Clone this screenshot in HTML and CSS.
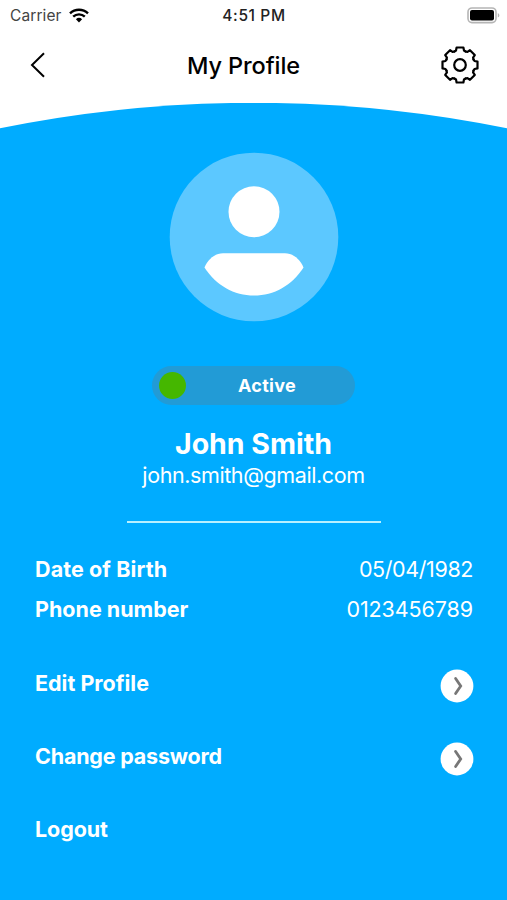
FILE: index.html
```html
<!DOCTYPE html>
<html lang="en">
<head>
    <meta charset="UTF-8">
    <title>My Profile</title>
    <link rel="stylesheet" href="styles.css">
</head>
<body>
    <div class="status-bar">
        <div class="carrier">
            <span>Carrier</span>
            <svg width="20" height="15" viewBox="0 0 20 15">
                <g fill="none" stroke="#000" stroke-width="2.4">
                    <path d="M1 5.3a13 13 0 0 1 18 0"/>
                    <path d="M4.2 8.7a8.4 8.4 0 0 1 11.6 0"/>
                </g>
                <path d="M10 14.4L6.900 11.3a4.5 4.5 0 0 1 6.2 0z"/>
            </svg>
        </div>
        <div class="time">4:51 PM</div>
        <div class="battery">
            <svg width="33" height="17" viewBox="0 0 33 17">
                <rect x="1" y="1" width="28" height="14.6" rx="4" fill="#fff" stroke="#b5b5b5" stroke-width="1.6"/>
                <rect x="3" y="3" width="24" height="10.4" rx="2"/>
                <path d="M30.8 6v4.6q1.6-.7 1.6-2.3t-1.6-2.3z" fill="#b5b5b5"/>
            </svg>
        </div>
    </div>

    <div class="header">
        <svg class="back" width="16" height="26" viewBox="0 0 16 26">
            <path d="M14 1.3L2 13l12 11.7" fill="none" stroke="#000" stroke-width="2"/>
        </svg>
        <h1>My Profile</h1>
        <svg class="settings" width="38" height="38" viewBox="-19 -19 38 38">
            <defs>
                <path id="tooth" d="M-5.6-13.5L-4-14.5L-3.4-17.5H3.4L4-14.5L5.6-13.5"/>
            </defs>
            <g fill="none" stroke="#000" stroke-width="2.2" stroke-linecap="round" stroke-linejoin="round">
                <use href="#tooth"/>
                <use href="#tooth" transform="rotate(45)"/>
                <use href="#tooth" transform="rotate(90)"/>
                <use href="#tooth" transform="rotate(135)"/>
                <use href="#tooth" transform="rotate(180)"/>
                <use href="#tooth" transform="rotate(225)"/>
                <use href="#tooth" transform="rotate(270)"/>
                <use href="#tooth" transform="rotate(315)"/>
                <circle r="5.8"/>
            </g>
        </svg>
    </div>

    <svg class="curve" width="507" height="26" viewBox="0 0 507 26">
        <path d="M0 25.3A1273 1273 0 0 1 507 25.3V26H0z" fill="#00acff"/>
    </svg>

    <div class="profile">
        <svg class="avatar" width="170" height="170" viewBox="0 0 170 170">
            <circle cx="85" cy="85" r="84.3" fill="#5cc8ff"/>
            <circle cx="85" cy="59.8" r="25.5" fill="#fff"/>
            <path d="M54 101.3H116C124 101.3 131 107 134.500 115.500C123 133.500 105 143.500 85 143.500S47 133.500 35.500 115.500C39 107 46 101.300 54 101.300z" fill="#fff"/>
        </svg>

        <div class="status">
            <span class="dot"></span>
            <span class="status-text">Active</span>
        </div>

        <div class="name">John Smith</div>
        <div class="email">john.smith@gmail.com</div>
        <div class="line"></div>

        <div class="details">
            <div class="row"><b class="birth">Date of Birth</b><span class="date">05/04/1982</span></div>
            <div class="row"><b class="phone">Phone number</b><span class="number">0123456789</span></div>
        </div>

        <div class="menu">
            <div class="item">
                <b class="edit">Edit Profile</b>
                <svg width="34" height="34" viewBox="0 0 34 34">
                    <circle cx="17" cy="17" r="16.4" fill="#fff"/>
                    <path d="M15.600 9.500L20.700 17l-5.100 7.500" fill="none" stroke="#777" stroke-width="2.800" stroke-linecap="round"/>
                </svg>
            </div>
            <div class="item">
                <b class="password">Change password</b>
                <svg width="34" height="34" viewBox="0 0 34 34">
                    <circle cx="17" cy="17" r="16.4" fill="#fff"/>
                    <path d="M15.600 9.500L20.700 17l-5.100 7.500" fill="none" stroke="#777" stroke-width="2.800" stroke-linecap="round"/>
                </svg>
            </div>
            <div class="item"><b class="logout">Logout</b></div>
        </div>
    </div>
</body>
</html>
```
FILE: styles.css
```css
* { box-sizing: border-box; }
body {
    margin: 0;
    height: 900px;
    display: flex;
    flex-direction: column;
    background-color: #fff;
    color: #000;
    font-family: Inter, "Liberation Sans", sans-serif;
    white-space: nowrap;
    overflow: hidden;
}
svg {
    display: block;
    flex-shrink: 0;
}
.status-bar {
    height: 30px;
    padding: 0 7px 0 10px;
    display: grid;
    grid-template-columns: 1fr auto 1fr;
    align-items: center;
    font-size: 15.5px;
}
.carrier {
    display: flex;
    align-items: center;
    gap: 7px;
    color: #444;
}
.carrier span { letter-spacing: 0.1px; }
.time {
    font-weight: 500;
    letter-spacing: 0.6px;
    padding-right: 2px;
    color: #222;
}
.battery {
    display: flex;
    justify-content: flex-end;
}
.header {
    height: 73px;
    padding: 0 28px 3px 30px;
    display: grid;
    grid-template-columns: 157px 1fr auto;
    align-items: center;
}
h1 {
    margin: 0;
    font-size: 23.5px;
    font-weight: 500;
    letter-spacing: -0.1px;
}
.profile {
    flex: 1;
    background-color: #00acff;
    color: #fff;
    display: flex;
    flex-direction: column;
    align-items: center;
    padding-top: 23px;
}
.status {
    width: 203px;
    height: 39px;
    margin-top: 44px;
    padding: 0 0 1px 7px;
    border-radius: 20px;
    background-color: #229bd6;
    display: flex;
    align-items: center;
}
.dot {
    width: 27px;
    height: 27px;
    border-radius: 50%;
    background-color: #45b700;
}
.status-text {
    margin-left: 52px;
    font-size: 18px;
    font-weight: 700;
    letter-spacing: 0.3px;
}
.name {
    margin-top: 21px;
    font-size: 28.5px;
    line-height: 36px;
    font-weight: 700;
}
.email {
    font-size: 21.5px;
    line-height: 26px;
    letter-spacing: -0.4px;
}
.line {
    width: 254px;
    height: 2px;
    margin-top: 33px;
    background-color: #b8f0ff;
}
.details {
    width: 100%;
    padding: 26px 34px 0 35px;
}
.row {
    height: 40px;
    display: flex;
    justify-content: space-between;
    align-items: center;
    font-size: 21.5px;
}
.birth { letter-spacing: 0.1px; }
.date { letter-spacing: -0.4px; }
.number { letter-spacing: -0.1px; }
.menu {
    width: 100%;
    padding: 17px 33px 0 35px;
}
.item {
    height: 73px;
    display: flex;
    justify-content: space-between;
    align-items: center;
    font-size: 21.5px;
}
.item svg { margin-top: 6px; }
.password { letter-spacing: -0.2px; }
.logout { letter-spacing: -0.1px; }
```
